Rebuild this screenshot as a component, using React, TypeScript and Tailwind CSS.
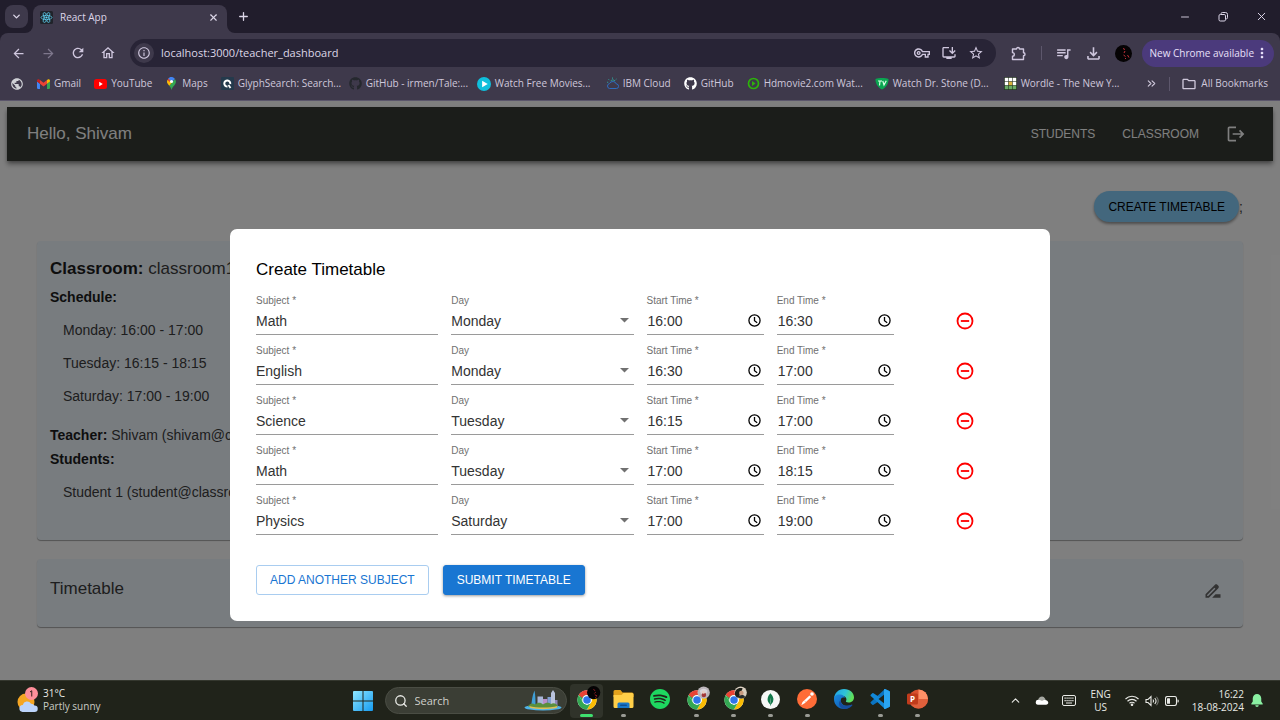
import React, { useId, useState } from "react";
import type { ReactNode } from "react";
import {
  MdArrowBack,
  MdArrowForward,
  MdDriveFileRenameOutline,
  MdInfoOutline,
  MdLogout,
  MdMoreVert,
  MdOutlineFileDownload,
  MdOutlineFolder,
  MdOutlineHome,
  MdOutlineInstallDesktop,
  MdOutlineVpnKey,
  MdPublic,
  MdQueueMusic,
  MdRefresh,
  MdStarBorder,
} from "react-icons/md";
import { FaGithub } from "react-icons/fa";
import { SiMongodb, SiSpotify } from "react-icons/si";
import { LuChevronDown, LuChevronUp, LuChevronsRight, LuMinus, LuPlus, LuSearch, LuX } from "react-icons/lu";

/* ---------- Logos ---------- */

function ReactLogo() {
  return (
    <svg viewBox="0 0 26 26" className="size-[13px] shrink-0" aria-hidden="true">
      <rect width="26" height="26" rx="3" fill="#20232a" />
      <g fill="none" stroke="#61dafb" strokeWidth="1.4">
        <ellipse cx="13" cy="13" rx="11" ry="4.2" />
        <ellipse cx="13" cy="13" rx="11" ry="4.2" transform="rotate(60 13 13)" />
        <ellipse cx="13" cy="13" rx="11" ry="4.2" transform="rotate(120 13 13)" />
      </g>
      <circle cx="13" cy="13" r="2.2" fill="#61dafb" />
    </svg>
  );
}

function GmailLogo() {
  return (
    <svg viewBox="0 0 24 18" className="h-[10px] w-[13px] shrink-0" aria-hidden="true">
      <path d="M0 2.5V16.4C0 17.3.7 18 1.6 18H5.5V8.7L0 4.6z" fill="#4285f4" />
      <path d="M18.5 18h3.9c.9 0 1.6-.7 1.6-1.6V4.6l-5.5 4.1z" fill="#34a853" />
      <path d="M18.5 1.6v7.1L24 4.6V2.5C24 .5 21.7-.7 20 .5z" fill="#fbbc04" />
      <path d="M5.5 8.7V1.6L12 6.5l6.5-4.9v7.1L12 13.6z" fill="#ea4335" />
      <path d="M0 2.5v2.1l5.5 4.1V1.6L4 .5C2.3-.7 0 .5 0 2.5z" fill="#c5221f" />
    </svg>
  );
}

function YouTubeLogo() {
  return (
    <svg viewBox="0 0 26 20" className="h-[10px] w-[13px] shrink-0" aria-hidden="true">
      <rect width="26" height="20" rx="5" fill="#ff0000" />
      <path d="M10.5 5.5v9l7-4.5z" fill="#fff" />
    </svg>
  );
}

function MapsLogo() {
  return (
    <svg viewBox="0 0 20 26" className="h-[13px] w-[13px] shrink-0" aria-hidden="true">
      <path d="M10 26c-1-4-2.500-6-4.500-8.500L16.800 4c1.400 1.700 2 3.600 2 5.600 0 6.400-6.800 8.900-8.800 16.400z" fill="#34a853" />
      <path d="M5.500 17.500C2.500 14 1 12 1 9.600c0-1.600.5-3 1.200-4.300l5 4.100 5.300 0z" fill="#fbbc04" />
      <path d="M2.200 5.300L4.600 2.500 8.500 6 6 10z" fill="#ea4335" />
      <path d="M3.500 3.500C6-1 13-1.200 16.800 4L10 10.500 7 6z" fill="#4285f4" />
      <circle cx="10" cy="9" r="3.100" fill="#fff" />
    </svg>
  );
}

function GlyphSearchLogo() {
  return (
    <svg viewBox="0 0 26 26" className="size-[13px] shrink-0" aria-hidden="true">
      <rect width="26" height="26" rx="2" fill="#243a4c" />
      <path d="M18.500 14a6 6 0 1 0-5.500 5" fill="none" stroke="#fff" strokeWidth="4" />
      <path d="M15 16l4 6" stroke="#fff" strokeWidth="3.5" />
    </svg>
  );
}

function PlayLogo() {
  return (
    <svg viewBox="0 0 26 26" className="size-[14px] shrink-0" aria-hidden="true">
      <circle cx="13" cy="13" r="13" fill="#0fbfdc" />
      <path d="M9.500 6.800v12.400L20 13z" fill="#fff" />
    </svg>
  );
}

function IbmCloudLogo() {
  return (
    <svg viewBox="0 0 26 26" className="size-[13px] shrink-0" fill="none" strokeWidth="1.9" aria-hidden="true">
      <path d="M7 23h13.500a4.500 4.500 0 0 0 .3-9A7.500 7.500 0 0 0 7 13.200 5 5 0 0 0 7 23z" stroke="#2e6fc4" />
      <path d="M9 8.500a5.500 5.500 0 0 1 9-.6M13 1v2.500M5 4.500l1.800 1.800M21 4l-1.800 1.800M2 10.500h2.500" stroke="#2fa09a" />
    </svg>
  );
}

function HdMovieLogo() {
  return (
    <svg viewBox="0 0 26 26" className="size-[13px] shrink-0" aria-hidden="true">
      <circle cx="13" cy="13" r="10" fill="none" stroke="#2db30b" strokeWidth="3.4" />
      <path d="M10 8v10l7-5z" fill="#2db30b" />
    </svg>
  );
}

function TvLogo() {
  return (
    <svg viewBox="0 0 28 26" className="h-[13px] w-[14px] shrink-0" aria-hidden="true">
      <path d="M1 4C8 1.500 20 1.500 27 4c.5 9-5 17-13 21C6 21 .5 13 1 4z" fill="#0aa651" />
      <path d="M6 8h8M10 8l-1 9M15.500 8l2.500 8 4.500-8.500" fill="none" stroke="#d9ffe6" strokeWidth="2.4" />
    </svg>
  );
}

function WordleLogo() {
  const cells = ["#fff", "#fff", "#fff", "#fff", "#d8b13a", "#fff", "#6aaa64", "#6aaa64", "#6aaa64"];
  return (
    <svg viewBox="0 0 26 26" className="size-[13px] shrink-0" aria-hidden="true">
      <rect width="26" height="26" rx="2" fill="#1d2b1a" />
      {cells.map((fill, i) => (
        <rect key={i} x={1.5 + (i % 3) * 8} y={1.5 + Math.floor(i / 3) * 8} width="7" height="7" fill={fill} />
      ))}
    </svg>
  );
}

function ExtensionIcon() {
  return (
    <svg viewBox="0 0 30 30" className="size-[15px]" fill="none" stroke="currentColor" strokeWidth="2.8" strokeLinejoin="round" aria-hidden="true">
      <path d="M3 6h8a3 3 0 0 1 6 0H25v7.500a3 3 0 0 1 0 6V27H3v-6.500a3.600 3.600 0 0 0 0-7.200z" />
    </svg>
  );
}

function ChromeLogo({ children }: { children?: ReactNode }) {
  return (
    <svg viewBox="0 0 48 48" className="size-[22px] overflow-visible" aria-hidden="true">
      <circle cx="24" cy="26" r="21" fill="#fff" />
      <path d="M42.200 15.500A21 21 0 0 1 24 47l9.100-15.750A10.500 10.500 0 0 0 33.100 20.700L24 15.500z" fill="#fbbc04" />
      <path d="M5.800 15.500A21 21 0 0 0 24 47l9.100-15.750L24 36.500 14.900 31.250z" fill="#34a853" />
      <path d="M5.800 15.500L14.900 31.250 24 26V15.500z" fill="#34a853" />
      <path d="M5.800 15.500A21 21 0 0 1 42.200 15.500H24A10.500 10.500 0 0 0 14 22z" fill="#ea4335" />
      <circle cx="24" cy="26" r="10.500" fill="#fff" />
      <circle cx="24" cy="26" r="8.200" fill="#2f74ea" />
      {children}
    </svg>
  );
}

function ChromeDark() {
  return (
    <ChromeLogo>
      <circle cx="38.500" cy="10" r="14.500" fill="#050304" />
      <path d="M38 3l4 3M43 9l-3 3M41 15l5 2M45 19l-3 2" stroke="#a3202a" strokeWidth="2" />
    </ChromeLogo>
  );
}

function ChromeLight() {
  return (
    <ChromeLogo>
      <circle cx="38.500" cy="10" r="13.500" fill="#bcb6bb" />
      <path d="M30 6c4-6 13-6 17 0l-3 8H33z" fill="#d9d5da" />
      <circle cx="39" cy="15" r="5" fill="#a33838" />
      <circle cx="38" cy="9" r="3.500" fill="#e8cfc4" />
    </ChromeLogo>
  );
}

function ChromePhoto() {
  return (
    <ChromeLogo>
      <circle cx="38.500" cy="10" r="13.500" fill="#d9cfc0" />
      <path d="M26 14c-1-10 8-16 17-13l-4 8-5 12c-4 0-7-3-8-7z" fill="#1d2018" />
      <circle cx="40" cy="11" r="5" fill="#c89a7f" />
      <path d="M33 20c3-6 11-6 15-2-2 5-9 7-15 2z" fill="#262b2e" />
    </ChromeLogo>
  );
}

function WindowsLogo() {
  return (
    <svg viewBox="0 0 40 40" className="size-5" aria-hidden="true">
      <defs>
        <linearGradient id="win" x1="0" y1="0" x2="1" y2="1">
          <stop offset="0" stopColor="#8fe6ff" />
          <stop offset="1" stopColor="#159bf0" />
        </linearGradient>
      </defs>
      <path d="M0 2a2 2 0 0 1 2-2h17v19H0zM21 0h17a2 2 0 0 1 2 2v17H21zM0 21h19v19H2a2 2 0 0 1-2-2zM21 21h19v17a2 2 0 0 1-2 2H21z" fill="url(#win)" />
    </svg>
  );
}

function SkylineArt() {
  return (
    <svg viewBox="0 0 76 42" className="h-[21px] w-[38px]" aria-hidden="true">
      <ellipse cx="38" cy="35" rx="37" ry="6" fill="#4db4ea" />
      <path d="M14 34c2-12 2-22 7-33 2 10 2 20 2 33z" fill="#3f9fd6" />
      <rect x="27" y="13" width="11" height="21" fill="#a9b6d8" />
      <rect x="38" y="18" width="9" height="16" fill="#b990c8" />
      <rect x="47" y="14" width="7" height="20" fill="#7f9fd2" />
      <path d="M54 6l4-6 4 6v28h-8z" fill="#b9c3dc" />
      <rect x="62" y="20" width="5" height="14" fill="#8e86b8" />
      <path d="M8 33c4-8 10-7 14-4 6-5 12-4 16 0 6-5 12-4 16-1 5-3 11-1 14 5-16 5-42 5-60 0z" fill="#5a8f3c" />
      <path d="M10 32c16 4 40 4 57 0l-2 4c-16 3-38 3-52 0z" fill="#e0bf55" />
    </svg>
  );
}

function ExplorerLogo() {
  return (
    <svg viewBox="0 0 42 40" className="h-5 w-[21px]" aria-hidden="true">
      <path d="M1 5a3 3 0 0 1 3-3h11l4 5h19a3 3 0 0 1 3 3v6H1z" fill="#e3a21c" />
      <path d="M1 12h16l4-4h17a3 3 0 0 1 3 3v24a3 3 0 0 1-3 3H4a3 3 0 0 1-3-3z" fill="#ffcf48" />
      <path d="M9 38V30a3 3 0 0 1 3-3h18a3 3 0 0 1 3 3v8z" fill="#1877c9" />
      <rect x="14" y="31" width="14" height="3" rx="1.500" fill="#0d4f94" />
    </svg>
  );
}

function PostmanLogo() {
  return (
    <svg viewBox="0 0 40 40" className="size-5" aria-hidden="true">
      <circle cx="20" cy="20" r="20" fill="#ff6c37" />
      <circle cx="30" cy="10" r="3.6" fill="#fff" />
      <path d="M25 13l3.500 3L16 28l-7.500 4.500L11 26z" fill="#fff" />
      <path d="M15 24l3 2.500" stroke="#ff6c37" strokeWidth="1" />
    </svg>
  );
}

function EdgeLogo() {
  return (
    <svg viewBox="0 0 40 40" className="size-5" aria-hidden="true">
      <defs>
        <linearGradient id="edgeTop" x1="0" y1="0" x2="1" y2="0.3">
          <stop offset="0" stopColor="#1f9fe8" />
          <stop offset="0.6" stopColor="#2fc3d8" />
          <stop offset="1" stopColor="#5fe05a" />
        </linearGradient>
        <linearGradient id="edgeLow" x1="0" y1="0" x2="1" y2="1">
          <stop offset="0" stopColor="#1a8be0" />
          <stop offset="1" stopColor="#0c4fa6" />
        </linearGradient>
      </defs>
      <path d="M0 19C1 8 9 0 20 0c12 0 20 8 20 17 0 6-5 10-11 10-4 0-6-1.500-5-3 2-3 1-9-6-10C9 12 1 16 0 19z" fill="url(#edgeTop)" />
      <path d="M0 20c0-6 6-10 12-9 5 0 9 3 10 7-6-3-10 2-8 8 2 7 12 10 22 5-4 6-10 9-16 9C8 40 0 31 0 20z" fill="url(#edgeLow)" />
      <path d="M13.500 22c-1 9 8 15 21.500 9.500 1.500-.7 2.500.3 1.500 1.500-5 6-13 8-19 6C9 36 8 26 13.500 22z" fill="#174e9e" />
    </svg>
  );
}

function VsCodeLogo() {
  return (
    <svg viewBox="0 0 40 40" className="size-5" aria-hidden="true">
      <path d="M30 0l8.500 4A3 3 0 0 1 40 6.500V10L7 31.500a2 2 0 0 1-2.400-.1L1.500 28.500a1.500 1.500 0 0 1 0-2.300z" fill="#0b74c2" />
      <path d="M30 40l8.500-4a3 3 0 0 0 1.500-2.500V30L7 8.500a2 2 0 0 0-2.400.1L1.500 11.500a1.500 1.500 0 0 0 0 2.300z" fill="#1288d8" />
      <path d="M30 0l8.500 4A3 3 0 0 1 40 6.500v27a3 3 0 0 1-1.500 2.500L30 40c-1 .3-2-.2-2-1.500V1.500C28 .2 29-.3 30 0z" fill="#2aa5f2" />
      <path d="M28 11.500v17L17 20z" fill="#20231a" />
    </svg>
  );
}

function PowerPointLogo() {
  return (
    <svg viewBox="0 0 42 40" className="h-5 w-[21px] font-['Open_Sans',sans-serif]" aria-hidden="true">
      <circle cx="23" cy="20" r="19" fill="#d9512f" />
      <path d="M23 1a19 19 0 0 1 19 19H23z" fill="#ff9067" />
      <path d="M4 20h38a19 19 0 0 1-38 0z" fill="#e0603c" />
      <rect x="0" y="9" width="22" height="22" rx="3" fill="#c13b1b" />
      <text x="11" y="26" textAnchor="middle" fontSize="16" fontWeight="700" fill="#fff">P</text>
    </svg>
  );
}

/* ---------- Browser window ---------- */

function TabStrip() {
  return (
    <div className="flex h-[33px] items-end bg-[#211d2c] pl-[5px] text-[#dcd6e8]">
      <button type="button" aria-label="Search tabs" className="mb-[5px] flex size-[23px] items-center justify-center rounded-lg bg-[#3e394b]">
        <LuChevronDown size={11} strokeWidth={3} />
      </button>
      <div className="relative ml-[5px] flex h-7 w-[194px] items-center rounded-t-lg bg-[#3e394b] pr-2 pb-1 pl-[7px]">
        <svg viewBox="0 0 8 8" className="absolute bottom-0 -left-2 size-2" aria-hidden="true">
          <path d="M8 0v8H0a8 8 0 0 0 8-8z" fill="#3e394b" />
        </svg>
        <svg viewBox="0 0 8 8" className="absolute -right-2 bottom-0 size-2" aria-hidden="true">
          <path d="M0 0v8h8a8 8 0 0 1-8-8z" fill="#3e394b" />
        </svg>
        <ReactLogo />
        <span className="ml-[7px] flex-1 text-[10px]">React App</span>
        <button type="button" aria-label="Close tab" className="flex size-3 items-center justify-center">
          <LuX size={11} strokeWidth={2.5} />
        </button>
      </div>
      <button type="button" aria-label="New tab" className="mb-[10px] ml-[10px]">
        <LuPlus size={13} strokeWidth={2.4} />
      </button>
      <div className="mb-[10px] ml-auto flex items-center gap-[26px] pr-3">
        <button type="button" aria-label="Minimize">
          <LuMinus size={12} strokeWidth={1.8} />
        </button>
        <button type="button" aria-label="Restore">
          <svg viewBox="0 0 12 12" className="size-3" fill="none" stroke="currentColor" aria-hidden="true">
            <rect x="2" y="3.5" width="6.5" height="6.5" rx="1.3" />
            <path d="M4 2.800C4 2 4.600 1.500 5.300 1.500H8.500a2 2 0 0 1 2 2v3.200c0 .8-.5 1.300-1.300 1.300" />
          </svg>
        </button>
        <button type="button" aria-label="Close">
          <LuX size={13} strokeWidth={1.8} />
        </button>
      </div>
    </div>
  );
}

function ToolButton({ label, dim, children }: { label: string; dim?: boolean; children: ReactNode }) {
  return (
    <button type="button" aria-label={label} className={dim ? "flex h-7 w-[30px] items-center justify-center text-[#7e778c]" : "flex h-7 w-[30px] items-center justify-center"}>
      {children}
    </button>
  );
}

function Toolbar() {
  return (
    <div className="flex items-center px-[3px] pt-[6px] text-[#cfc7de]">
      <ToolButton label="Back"><MdArrowBack size={15} /></ToolButton>
      <ToolButton label="Forward" dim><MdArrowForward size={15} /></ToolButton>
      <ToolButton label="Reload"><MdRefresh size={16} /></ToolButton>
      <ToolButton label="Home"><MdOutlineHome size={16} /></ToolButton>
      <div className="ml-[7px] flex h-7 flex-1 items-center rounded-full bg-[#282436] pr-3 pl-1">
        <span className="flex size-5 items-center justify-center rounded-full bg-[#3e394b]">
          <MdInfoOutline size={14} />
        </span>
        <input
          aria-label="Address"
          defaultValue="localhost:3000/teacher_dashboard"
          className="ml-[7px] min-w-0 flex-1 bg-transparent text-[11px] text-[#dcd6e6] outline-none"
        />
        <div className="flex items-center gap-[11px]">
          <MdOutlineVpnKey size={16} />
          <MdOutlineInstallDesktop size={16} />
          <MdStarBorder size={16} />
        </div>
      </div>
      <div className="ml-2 flex items-center">
        <ToolButton label="Extensions"><ExtensionIcon /></ToolButton>
        <span className="mx-[7px] h-[14px] w-px bg-[#5d576c]" />
        <ToolButton label="Media"><MdQueueMusic size={17} /></ToolButton>
        <ToolButton label="Downloads"><MdOutlineFileDownload size={19} /></ToolButton>
        <svg viewBox="0 0 34 34" className="ml-[6px] size-[17px]" role="img" aria-label="Profile">
          <circle cx="17" cy="17" r="17" fill="#050304" />
          <path d="M16 7l4 2M20 12l-2 4M17 20l4 3M25 20l3 5M20 26l2 2" stroke="#c2303a" strokeWidth="2" />
        </svg>
      </div>
      <button type="button" className="mr-[3px] ml-[10px] flex h-[27px] items-center rounded-full bg-[#4b3a7c] pr-1 pl-2 text-[10px] whitespace-nowrap text-[#e8e0fa]">
        New Chrome available
        <MdMoreVert size={16} />
      </button>
    </div>
  );
}

type Bookmark = { title: string; icon: ReactNode; long?: boolean };

const bookmarks: Bookmark[] = [
  { title: "Gmail", icon: <GmailLogo /> },
  { title: "YouTube", icon: <YouTubeLogo /> },
  { title: "Maps", icon: <MapsLogo /> },
  { title: "GlyphSearch: Search...", icon: <GlyphSearchLogo />, long: true },
  { title: "GitHub - irmen/Tale:...", icon: <FaGithub size={13} className="shrink-0 text-[#25282e]" />, long: true },
  { title: "Watch Free Movies...", icon: <PlayLogo />, long: true },
  { title: "IBM Cloud", icon: <IbmCloudLogo /> },
  { title: "GitHub", icon: <FaGithub size={13} className="shrink-0 text-white" /> },
  { title: "Hdmovie2.com Wat...", icon: <HdMovieLogo />, long: true },
  { title: "Watch Dr. Stone (D...", icon: <TvLogo />, long: true },
  { title: "Wordle - The New Y...", icon: <WordleLogo />, long: true },
];

function BookmarksBar() {
  return (
    <nav aria-label="Bookmarks" className="flex h-[34px] items-center border-b border-[#5b566b] pr-3 pl-[10px] text-[10px] whitespace-nowrap text-[#cfc8db]">
      <MdPublic size={14} className="mr-[13px] shrink-0 text-[#cfd1d6]" />
      <div className="flex min-w-0 flex-1 items-center gap-2 overflow-hidden">
        {bookmarks.map((b) => (
          <a key={b.title} href="#" className="flex shrink-0 items-center gap-1">
            {b.icon}
            <span className={b.long ? "w-[103px]" : "pr-[5px]"}>{b.title}</span>
          </a>
        ))}
      </div>
      <button type="button" aria-label="More bookmarks"><LuChevronsRight size={13} /></button>
      <span className="mx-[11px] h-[14px] w-px bg-[#5d576c]" />
      <a href="#" className="flex items-center gap-1">
        <MdOutlineFolder size={16} />
        All Bookmarks
      </a>
    </nav>
  );
}

/* ---------- Dashboard ---------- */

function Dashboard() {
  return (
    <div className="px-[7px] pt-[6px]">
      <header className="flex h-[54px] items-center justify-between bg-[#363a34] pr-[27px] pl-5 text-white shadow-[0_2px_4px_-1px_rgba(0,0,0,0.4),0_4px_5px_rgba(0,0,0,0.25)]">
        <h1 className="text-[17px]">Hello, Shivam</h1>
        <nav className="flex items-center gap-[27px] text-xs">
          <a href="#">STUDENTS</a>
          <a href="#">CLASSROOM</a>
          <button type="button" aria-label="Log out"><MdLogout size={20} /></button>
        </nav>
      </header>
      <main className="flex flex-col gap-[19px] px-[30px] pt-[30px] text-sm text-[#3c3c3c]">
        <div className="flex items-center justify-end">
          <button type="button" className="h-[31px] rounded-full bg-[#87cefa] px-[14px] text-xs text-black shadow-[0_2px_3px_rgba(0,0,0,0.4)]">
            CREATE TIMETABLE
          </button>
          ;
        </div>
        <section className="rounded bg-[#f0f8ff] px-[13px] pt-[14px] pb-[31px] shadow-[0_1px_1px_rgba(0,0,0,0.35)]">
          <h2 className="text-[17px] leading-7"><b className="text-[#1c1c1c]">Classroom:</b> classroom1</h2>
          <h3 className="mt-[2px] leading-6 font-bold text-[#1c1c1c]">Schedule:</h3>
          <ul className="mt-[5px] pl-[13px] leading-[33px]">
            <li>Monday: 16:00 - 17:00</li>
            <li>Tuesday: 16:15 - 18:15</li>
            <li>Saturday: 17:00 - 19:00</li>
          </ul>
          <p className="mt-[10px] leading-6"><b className="text-[#1c1c1c]">Teacher:</b> Shivam (shivam@classroom.com)</p>
          <h3 className="leading-6 font-bold text-[#1c1c1c]">Students:</h3>
          <ul className="mt-[5px] pl-[13px] leading-[33px]">
            <li>Student 1 (student@classroom.com)</li>
          </ul>
        </section>
        <section className="flex h-[68px] items-center justify-between rounded bg-[#f0f8ff] pr-5 pb-2 pl-[13px] shadow-[0_1px_1px_rgba(0,0,0,0.35)]">
          <h2 className="text-[17px]">Timetable</h2>
          <button type="button" aria-label="Edit timetable" className="mt-1 text-[#666]"><MdDriveFileRenameOutline size={20} /></button>
        </section>
      </main>
    </div>
  );
}

/* ---------- Create timetable dialog ---------- */

type Row = { id: number; subject: string; day: string; start: string; end: string };

const initialRows: Row[] = [
  { id: 1, subject: "Math", day: "Monday", start: "16:00", end: "16:30" },
  { id: 2, subject: "English", day: "Monday", start: "16:30", end: "17:00" },
  { id: 3, subject: "Science", day: "Tuesday", start: "16:15", end: "17:00" },
  { id: 4, subject: "Math", day: "Tuesday", start: "17:00", end: "18:15" },
  { id: 5, subject: "Physics", day: "Saturday", start: "17:00", end: "19:00" },
];

const days = ["Monday", "Tuesday", "Wednesday", "Thursday", "Friday", "Saturday"];

function Field({ id, label, className, children }: { id: string; label: string; className: string; children: ReactNode }) {
  return (
    <div className={className}>
      <label htmlFor={id} className="block text-[10px] leading-3 text-[#707070]">{label}</label>
      <div className="relative flex h-7 items-center border-b border-[#9a9a9a]">{children}</div>
    </div>
  );
}

function TimeField({ label, value, onChange }: { label: string; value: string; onChange: (v: string) => void }) {
  const id = useId();
  return (
    <Field id={id} label={label} className="col-span-2">
      <input id={id} value={value} onChange={(e) => onChange(e.target.value)} className="min-w-0 flex-1 bg-transparent pl-px outline-none" />
      <button type="button" aria-label="Pick a time" className="mr-[3px] text-black">
        <svg viewBox="0 0 24 24" className="size-[13px]" fill="none" stroke="currentColor" strokeWidth="2.4" aria-hidden="true">
          <circle cx="12" cy="12" r="10.300" />
          <path d="M12 5.500v7l5 3.500" />
        </svg>
      </button>
    </Field>
  );
}

function SubjectRow({ row, onChange, onRemove }: { row: Row; onChange: (patch: Partial<Row>) => void; onRemove: () => void }) {
  const subjectId = useId();
  const dayId = useId();
  return (
    <div className="grid grid-cols-12 gap-x-[13px]">
      <Field id={subjectId} label="Subject *" className="col-span-3">
        <input id={subjectId} value={row.subject} onChange={(e) => onChange({ subject: e.target.value })} className="w-full bg-transparent outline-none" />
      </Field>
      <Field id={dayId} label="Day" className="col-span-3">
        <select id={dayId} value={row.day} onChange={(e) => onChange({ day: e.target.value })} className="w-full appearance-none bg-transparent outline-none">
          {days.map((d) => (
            <option key={d}>{d}</option>
          ))}
        </select>
        <svg viewBox="0 0 18 10" className="pointer-events-none absolute right-[5px] h-[5px] w-[9px]" aria-hidden="true">
          <path d="M0 0h18L9 9z" fill="#707070" />
        </svg>
      </Field>
      <TimeField label="Start Time *" value={row.start} onChange={(start) => onChange({ start })} />
      <TimeField label="End Time *" value={row.end} onChange={(end) => onChange({ end })} />
      <div className="col-span-2 flex items-center justify-center pt-3">
        <button type="button" aria-label="Remove subject" onClick={onRemove} className="text-[#ff0000]">
          <svg viewBox="0 0 24 24" className="size-5" fill="none" stroke="currentColor" strokeWidth="2.2" aria-hidden="true">
            <circle cx="12" cy="12" r="9" />
            <path d="M7 12h10" />
          </svg>
        </button>
      </div>
    </div>
  );
}

function TimetableDialog() {
  const [rows, setRows] = useState(initialRows);
  const update = (id: number, patch: Partial<Row>) => setRows(rows.map((r) => (r.id === id ? { ...r, ...patch } : r)));
  const add = () => setRows([...rows, { id: Date.now(), subject: "", day: "Monday", start: "", end: "" }]);
  return (
    <div className="absolute inset-0 flex items-start justify-center bg-black/50 pt-32">
      <form
        role="dialog"
        aria-label="Create Timetable"
        onSubmit={(e) => e.preventDefault()}
        className="w-[820px] max-w-full rounded-[7px] bg-white px-[26px] pt-[27px] pb-[26px] text-sm text-[#333]"
      >
        <h2 className="mb-3 text-[17px] leading-[27px] text-black">Create Timetable</h2>
        <div className="flex flex-col gap-[10px]">
          {rows.map((row) => (
            <SubjectRow key={row.id} row={row} onChange={(patch) => update(row.id, patch)} onRemove={() => setRows(rows.filter((r) => r.id !== row.id))} />
          ))}
        </div>
        <div className="mt-[30px] flex gap-[14px] text-xs">
          <button type="button" onClick={add} className="h-[30px] rounded-[3px] border border-[#a9cdf0] px-[13px] text-[#1976d2]">
            ADD ANOTHER SUBJECT
          </button>
          <button type="submit" className="h-[30px] rounded-[3px] border border-[#1976d2] bg-[#1976d2] px-[13px] text-white shadow-[0_1px_3px_rgba(0,0,0,0.4)]">
            SUBMIT TIMETABLE
          </button>
        </div>
      </form>
    </div>
  );
}

/* ---------- Taskbar ---------- */

type TaskApp = { name: string; icon: ReactNode; state: "active" | "running" | "idle" };

const apps: TaskApp[] = [
  { name: "Chrome", icon: <ChromeDark />, state: "active" },
  { name: "File Explorer", icon: <ExplorerLogo />, state: "running" },
  { name: "Spotify", icon: <SiSpotify size={20} className="text-[#1ed760]" />, state: "idle" },
  { name: "Chrome, second profile", icon: <ChromeLight />, state: "running" },
  { name: "Chrome, third profile", icon: <ChromePhoto />, state: "running" },
  {
    name: "MongoDB Compass",
    icon: (
      <span className="flex size-[19px] items-center justify-center rounded-full bg-[#f6f7f6]">
        <SiMongodb size={13} className="text-[#12774a]" />
      </span>
    ),
    state: "running",
  },
  { name: "Postman", icon: <PostmanLogo />, state: "running" },
  { name: "Edge", icon: <EdgeLogo />, state: "idle" },
  { name: "Visual Studio Code", icon: <VsCodeLogo />, state: "running" },
  { name: "PowerPoint", icon: <PowerPointLogo />, state: "running" },
];

const markerClass = {
  active: "h-[3px] w-[13px] rounded-full bg-[#3fe06f]",
  running: "h-[3px] w-[5px] rounded-full bg-[#9a9b95]",
  idle: "h-[3px] w-[5px]",
};

function Taskbar() {
  return (
    <footer className="grid h-10 grid-cols-[1fr_auto_1fr] items-center border-t border-[#34372e] bg-[#20231a] text-[10px] leading-[13px] text-[#e9eae6]">
      <div className="flex items-center gap-[5px] pb-[2px] pl-[17px]">
        <svg viewBox="0 0 42 50" className="h-[25px] w-[21px]" aria-hidden="true">
          <circle cx="18" cy="30" r="17" fill="#f5a623" />
          <path d="M12 50a7 7 0 0 1-.5-14 9 9 0 0 1 16.500-2.500A8 8 0 0 1 35 37a6.500 6.500 0 0 1 0 13z" fill="#bcd4fb" />
          <circle cx="29" cy="13" r="13" fill="#ff8f9b" />
          <path d="M26 10l3.500-2.500V19" fill="none" stroke="#33201f" strokeWidth="2" />
        </svg>
        <div>
          <div>31°C</div>
          <div className="text-[#c9cbc4]">Partly sunny</div>
        </div>
      </div>
      <div className="flex items-center">
        <button type="button" aria-label="Start" className="flex w-9 justify-center"><WindowsLogo /></button>
        <label className="ml-1 flex h-[27px] w-[182px] items-center rounded-full border border-[#4a4d44] bg-[#3b3e35] pr-1 pl-2">
          <LuSearch size={14} strokeWidth={2.2} />
          <input aria-label="Search" placeholder="Search" className="ml-[7px] min-w-0 flex-1 bg-transparent text-[11px] outline-none placeholder:text-[#cfd0cb]" />
          <SkylineArt />
        </label>
        <div className="ml-[2px] grid w-[367px] grid-cols-10">
          {apps.map((app) => (
            <button key={app.name} type="button" aria-label={app.name} className="flex justify-center">
              <span className={app.state === "active" ? "flex h-[34px] w-[33px] flex-col items-center justify-end rounded bg-[#30332a]" : "flex h-[34px] w-[33px] flex-col items-center justify-end"}>
                <span className="flex h-[23px] items-center">{app.icon}</span>
                <span className="flex h-[7px] items-end pb-px">
                  <span className={markerClass[app.state]} />
                </span>
              </span>
            </button>
          ))}
        </div>
      </div>
      <div className="flex items-center justify-end pr-[17px]">
        <LuChevronUp size={13} />
        <svg viewBox="0 0 28 18" className="ml-[13px] h-[9px] w-[14px]" aria-hidden="true">
          <path d="M7 10a7 7 0 0 1 13-5l2 4-12 4z" fill="#a6a8a2" />
          <path d="M6 17.500a5 5 0 0 1 1-10c3 0 5 1.500 7 2.500 2-2 5-3 8-1.500 6 1 6 9 0 9z" fill="#fff" />
        </svg>
        <svg viewBox="0 0 28 22" className="ml-[13px] h-[11px] w-[14px]" aria-hidden="true">
          <rect x="1" y="1" width="26" height="20" rx="3" fill="none" stroke="currentColor" strokeWidth="2" />
          <path d="M5 6h18M5 11h18" stroke="currentColor" strokeWidth="2.5" strokeDasharray="2.5 1.4" />
          <path d="M8 16h12" stroke="currentColor" strokeWidth="2" />
        </svg>
        <div className="ml-[14px] text-center">
          <div>ENG</div>
          <div>US</div>
        </div>
        <svg viewBox="0 0 28 22" className="ml-[14px] h-[11px] w-[14px]" fill="none" stroke="currentColor" strokeWidth="2.2" aria-hidden="true">
          <path d="M1 8a18 18 0 0 1 26 0M5 12.500a12.500 12.500 0 0 1 18 0M9 16.500a7 7 0 0 1 10 0" />
          <circle cx="14" cy="19.500" r="1.500" fill="currentColor" />
        </svg>
        <svg viewBox="0 0 28 24" className="ml-[6px] h-3 w-[14px]" fill="none" stroke="currentColor" strokeWidth="2.2" aria-hidden="true">
          <path d="M2 9h4l6-6v18l-6-6H2z" />
          <path d="M16 9c1.500 2 1.500 4 0 6M19.500 6c3.500 4 3.500 8 0 12" />
          <path d="M23 3.500c5 6 5 11 0 17" stroke="#787a74" />
        </svg>
        <svg viewBox="0 0 28 20" className="ml-[6px] h-[10px] w-[14px]" aria-hidden="true">
          <rect x="1" y="1" width="22" height="18" rx="4" fill="none" stroke="currentColor" strokeWidth="2.2" />
          <rect x="4" y="4.5" width="6" height="11" rx="1" fill="currentColor" />
          <path d="M25 7c2 0 2.500 1 2.500 3S27 13 25 13z" fill="currentColor" />
        </svg>
        <div className="ml-[13px] text-right whitespace-nowrap">
          <div>16:22</div>
          <div>18-08-2024</div>
        </div>
        <svg viewBox="0 0 24 26" className="ml-[7px] h-[13px] w-3" aria-hidden="true">
          <path d="M12 0a8.500 8.500 0 0 1 8.500 8.500V15l3 4.500c.4.800 0 1.500-1 1.500h-21c-1 0-1.400-.7-1-1.500l3-4.500V8.500A8.500 8.500 0 0 1 12 0zM8.500 22.500h7a3.500 3.500 0 0 1-7 0z" fill="#8af0a2" />
        </svg>
      </div>
    </footer>
  );
}

export default function App() {
  return (
    <div className="flex min-h-screen flex-col bg-[#211d2c] font-['Open_Sans',sans-serif]">
      <TabStrip />
      <div className="rounded-t-lg bg-[#3e394b]">
        <Toolbar />
        <BookmarksBar />
      </div>
      <div className="relative flex-1 overflow-hidden bg-white font-['Liberation_Sans',sans-serif]">
        <Dashboard />
        <TimetableDialog />
      </div>
      <Taskbar />
    </div>
  );
}
